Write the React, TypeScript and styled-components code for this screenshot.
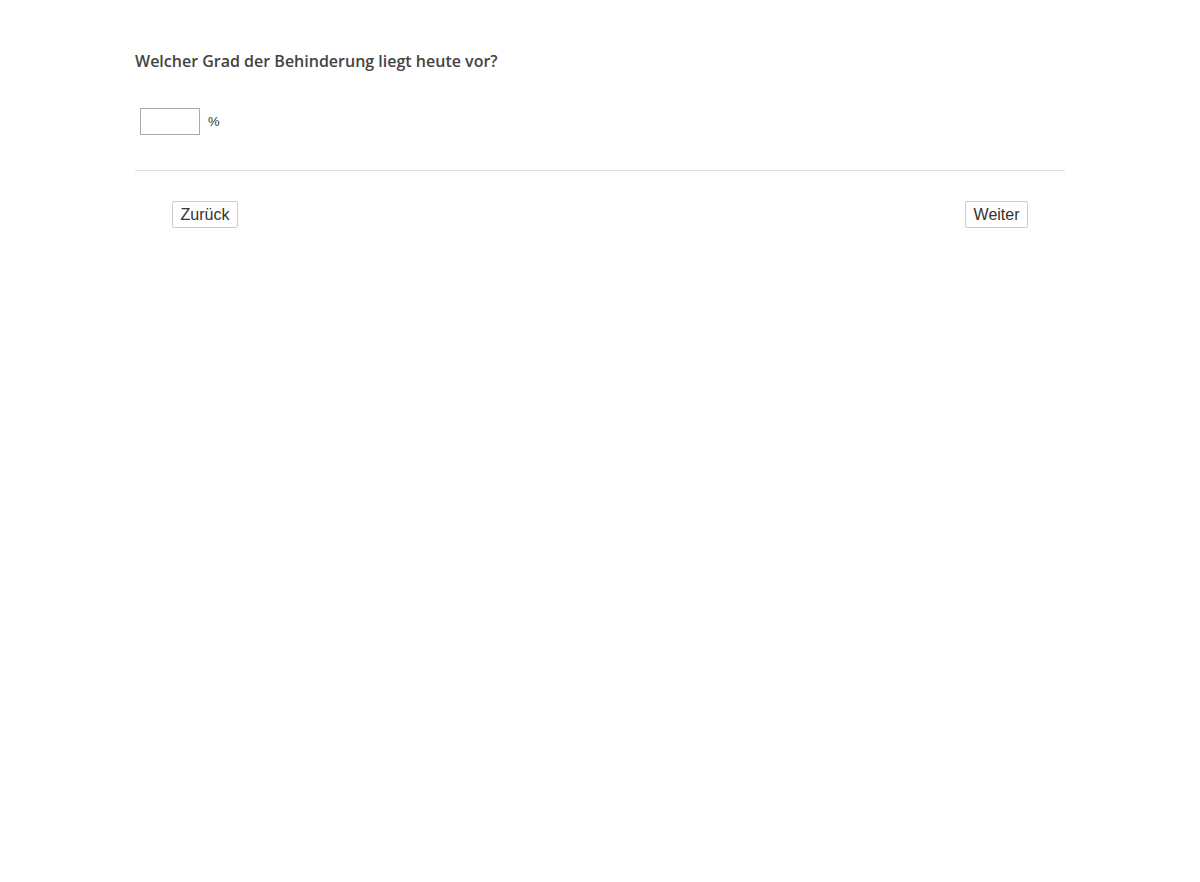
import React from "react";
import styled, { createGlobalStyle } from "styled-components";

const Global = createGlobalStyle`
  html, body { margin: 0; padding: 0; background: #fff; }
  body { font-family: "Open Sans", "Liberation Sans", sans-serif; color: #444; }
`;

const Page = styled.main`
  max-width: 930px;
  margin: 0 auto;
  padding-top: 50px;
`;

const Question = styled.h2`
  margin: 0;
  font-size: 16px;
  font-weight: 600;
  line-height: 22px;
  color: #444;
`;

const AnswerRow = styled.div`
  display: flex;
  align-items: center;
  gap: 8px;
  padding: 36px 0 0 5px;
  height: 27px;
`;

const NumberInput = styled.input`
  box-sizing: border-box;
  width: 60px;
  height: 27px;
  border: 1px solid #aaa;
  border-radius: 0;
  padding: 2px 4px;
  font-family: "Liberation Sans", Arial, sans-serif;
  font-size: 14px;
  outline: none;
`;

const Unit = styled.span`
  font-family: "Liberation Sans", Arial, sans-serif;
  font-size: 13px;
  color: #333;
`;

const Divider = styled.hr`
  margin: 35px 0 0;
  border: none;
  border-top: 1px solid #ddd;
`;

const Nav = styled.div`
  display: flex;
  justify-content: space-between;
  padding: 30px 37px 0;
`;

const NavButton = styled.button`
  box-sizing: border-box;
  height: 27px;
  padding: 0 7.5px;
  background: #fff;
  border: 1px solid #ccc;
  border-radius: 2px;
  font-family: "Liberation Sans", Arial, sans-serif;
  font-size: 16px;
  color: #333;
  cursor: pointer;
`;

export default function App() {
  return (
    <>
      <Global />
      <Page>
        <Question>Welcher Grad der Behinderung liegt heute vor?</Question>
        <AnswerRow>
          <NumberInput type="text" />
          <Unit>%</Unit>
        </AnswerRow>
        <Divider />
        <Nav>
          <NavButton>Zurück</NavButton>
          <NavButton>Weiter</NavButton>
        </Nav>
      </Page>
    </>
  );
}
